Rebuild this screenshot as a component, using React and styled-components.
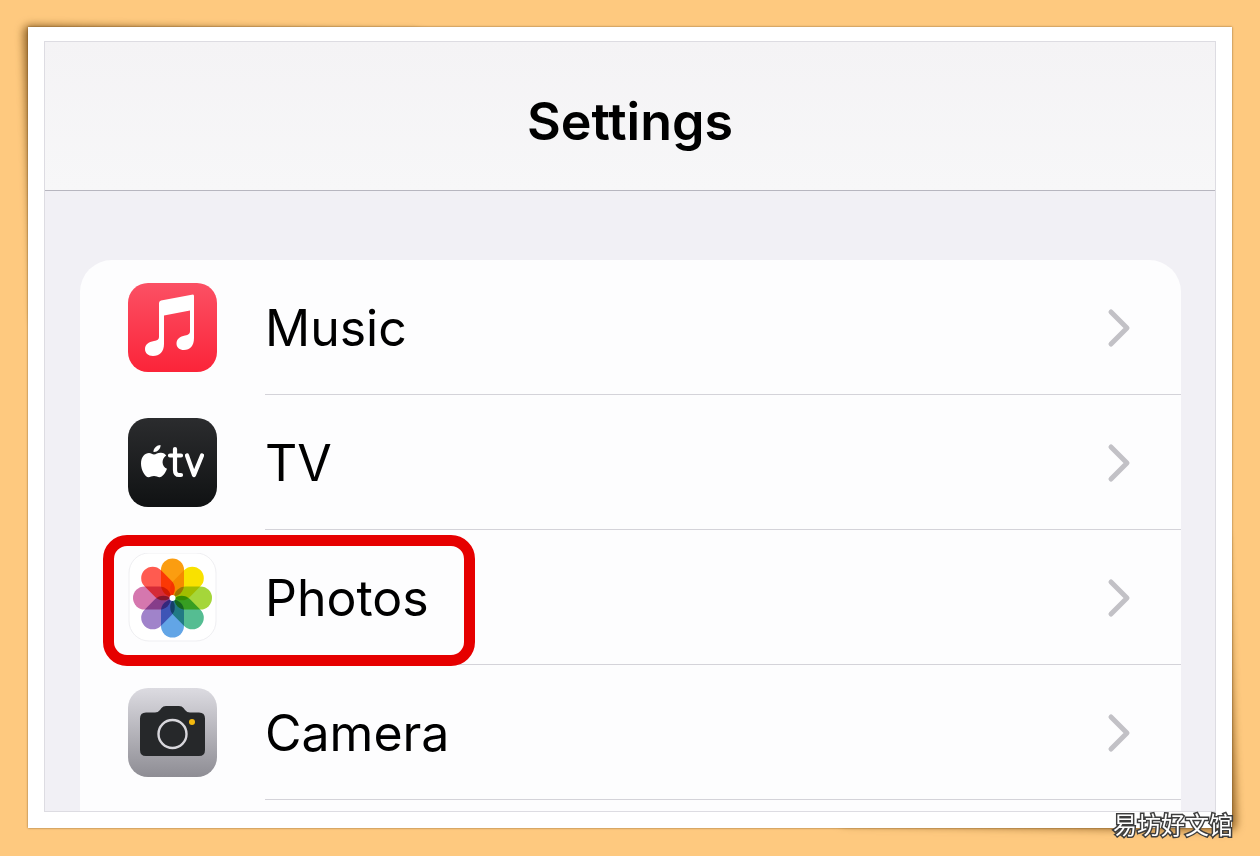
import React from "react";
import styled, { createGlobalStyle } from "styled-components";

const GlobalStyle = createGlobalStyle`
  *, *::before, *::after { box-sizing: border-box; }
  body {
    margin: 0;
    background: #fec97f;
    color: #000;
    font-family: Inter, "Liberation Sans", sans-serif;
  }
`;

const Page = styled.div`
  position: relative;
  min-height: 100vh;
  padding: 27px 28px 27px 28px;
  overflow: hidden;
  isolation: isolate;
`;

const Frame = styled.div`
  position: relative;
  padding: 14px 16px 16px;
  background: #fff;
  box-shadow: 0 0 2px rgba(90, 60, 20, 0.7);
`;

const Shadow = styled.div`
  position: absolute;
  z-index: -1;
  width: 400px;
  height: 300px;
  border-radius: 8px;
  filter: blur(4px);
  transform: skew(2deg, 1deg);
  background: rgba(110, 66, 10, 0.7);
  ${(p) =>
    p.$corner === "top"
      ? "top: 25px; left: 23px; transform-origin: top left;"
      : "bottom: 25px; right: 23px; transform-origin: bottom right;"}
`;

const Screen = styled.main`
  display: flex;
  flex-direction: column;
  border: 1px solid #dddce2;
  background: #f1f0f5;
`;

const Header = styled.header`
  display: flex;
  align-items: center;
  justify-content: center;
  height: 149px;
  padding-top: 12px;
  border-bottom: 1px solid #b7b6bf;
  background: linear-gradient(#f4f3f5, #f7f7f8);
`;

const Title = styled.h1`
  margin: 0;
  font-size: 52px;
  line-height: 60px;
  font-weight: 600;
`;

const Card = styled.nav`
  margin: 69px 34px 0 35px;
  padding-bottom: 11px;
  border-radius: 32px 32px 0 0;
  background: #fdfdfe;
`;

const List = styled.ul`
  margin: 0;
  padding: 0;
  list-style: none;
`;

const Row = styled.a`
  position: relative;
  display: flex;
  align-items: center;
  gap: 48px;
  height: 135px;
  padding-left: 48px;
  color: inherit;
  text-decoration: none;
`;

const RowBody = styled.span`
  display: flex;
  flex: 1;
  align-items: center;
  justify-content: space-between;
  height: 100%;
  padding: 2px 50px 0 0;
  border-bottom: 1px solid #d4d3d9;
`;

const Label = styled.span`
  font-size: 50px;
  line-height: 60px;
`;

const Highlight = styled.span`
  position: absolute;
  top: 5px;
  left: 23px;
  width: 372px;
  height: 131px;
  border: 11px solid #e60000;
  border-radius: 24px;
`;

const AppIcon = styled.svg`
  flex: none;
  width: 89px;
  height: 89px;
`;

const ChevronIcon = styled.svg`
  flex: none;
  width: 24px;
  height: 40px;
`;

const Watermark = styled.span`
  position: absolute;
  right: 27px;
  bottom: 17px;
  color: #fff;
  font-family: "Noto Sans CJK SC", sans-serif;
  font-size: 24px;
  line-height: 30px;
  -webkit-text-stroke: 3px #3d3d3d;
  paint-order: stroke fill;
`;

function MusicIcon() {
  return (
    <AppIcon viewBox="0 0 89 89" aria-hidden="true">
      <defs>
        <linearGradient id="musicFill" x1="0" y1="0" x2="0" y2="1">
          <stop offset="0" stopColor="#fb5064" />
          <stop offset="1" stopColor="#fb2439" />
        </linearGradient>
      </defs>
      <rect width="89" height="89" rx="20" fill="url(#musicFill)" />
      <path
        fill="#fff"
        d="M33 17.500 65 11.500Q66 11.500 66 13V55C66 63 62 67 56 67 51.500 67 48.500 64.500 48.500 60.500 48.500 56 52 53.500 57 52.500 60.500 51.800 62 51 62 48V27.500L36 32.500V61C36 69 31.500 73 25 73 20 73 17 70 17 66 17 61.500 20.500 59 26 58 29.500 57.400 31 56.500 31 53.500V20Q31 18 33 17.500Z"
      />
    </AppIcon>
  );
}

function TvIcon() {
  return (
    <AppIcon viewBox="0 0 89 89" aria-hidden="true">
      <defs>
        <linearGradient id="tvFill" x1="0" y1="0" x2="0" y2="1">
          <stop offset="0" stopColor="#2b2c2e" />
          <stop offset="1" stopColor="#101213" />
        </linearGradient>
      </defs>
      <rect width="89" height="89" rx="20" fill="url(#tvFill)" />
      <g fill="#fff">
        <path d="M32.500 27C33 30.500 29 34.500 25.500 34 25 30.500 29 27 32.500 27Z" />
        <path d="M26 36.500C28 36.500 30 34.500 33 34.800 35.500 35 37.200 36 38.200 37.500 33 41 33.500 48.500 39 50.800 37.500 55 34.500 59.200 31.500 59.200 29.500 59.200 28.500 58 26 58 23.500 58 22.500 59.200 20.500 59.200 17 59.200 13 52 13 45.500 13 39 17 35 21 35 23 35 24.500 36.500 26 36.500Z" />
      </g>
      <g fill="none" stroke="#fff" strokeWidth="4.200" strokeLinecap="round" strokeLinejoin="round">
        <path d="M47 31V52Q47 57 51 57H53M42 37.500H53M59 37.500 66 57 74 37.500" />
      </g>
    </AppIcon>
  );
}

const PETALS = [
  ["#fb9d10", 0],
  ["#f9e100", 45],
  ["#a5d63a", 90],
  ["#55bd92", 135],
  ["#62a5e6", 180],
  ["#a083ca", 225],
  ["#d577ae", 270],
  ["#ff5b50", 315],
];

const PetalGroup = styled.g`
  isolation: isolate;
`;

const Petal = styled.rect`
  mix-blend-mode: multiply;
`;

function PhotosIcon() {
  return (
    <AppIcon viewBox="0 0 89 89" aria-hidden="true">
      <rect x="1" y="0" width="87" height="88" rx="20" fill="#fff" stroke="#efeff2" />
      <PetalGroup>
        {PETALS.map(([color, angle]) => (
          <Petal
            key={angle}
            x="33"
            y="5.500"
            width="23"
            height="38"
            rx="11.500"
            fill={color}
            transform={`rotate(${angle} 44.500 45)`}
          />
        ))}
      </PetalGroup>
      <circle cx="44.500" cy="45" r="3" fill="#fff" />
    </AppIcon>
  );
}

function CameraIcon() {
  return (
    <AppIcon viewBox="0 0 89 89" aria-hidden="true">
      <defs>
        <linearGradient id="cameraFill" x1="0" y1="0" x2="0" y2="1">
          <stop offset="0" stopColor="#dcdbe1" />
          <stop offset="1" stopColor="#8e8d94" />
        </linearGradient>
      </defs>
      <rect width="89" height="89" rx="20" fill="url(#cameraFill)" />
      <path
        fill="#26282a"
        d="M18 24.500H27Q30 24.500 32 22L33.500 20Q35 18 38 18H51Q54 18 55.500 20L57 22Q59 24.500 62 24.500H71Q77 24.500 77 30.500V62Q77 68 71 68H18Q12 68 12 62V30.500Q12 24.500 18 24.500Z"
      />
      <circle cx="44.500" cy="46" r="14" fill="none" stroke="#d8d7dc" strokeWidth="2.400" />
      <circle cx="64" cy="34" r="3" fill="#f3b90f" />
    </AppIcon>
  );
}

function Chevron() {
  return (
    <ChevronIcon viewBox="0 0 24 40" aria-hidden="true">
      <path d="M4 4 20 20 4 36" fill="none" stroke="#c2c1c6" strokeWidth="5" strokeLinecap="round" strokeLinejoin="round" />
    </ChevronIcon>
  );
}

const ITEMS = [
  { label: "Music", Icon: MusicIcon },
  { label: "TV", Icon: TvIcon },
  { label: "Photos", Icon: PhotosIcon, highlighted: true },
  { label: "Camera", Icon: CameraIcon },
];

export default function App() {
  return (
    <Page>
      <GlobalStyle />
      <Shadow $corner="top" />
      <Shadow $corner="bottom" />
      <Frame>
        <Screen>
          <Header>
            <Title>Settings</Title>
          </Header>
          <Card>
            <List>
              {ITEMS.map(({ label, Icon, highlighted }) => (
                <li key={label}>
                  <Row href="#">
                    <Icon />
                    <RowBody>
                      <Label>{label}</Label>
                      <Chevron />
                    </RowBody>
                    {highlighted && <Highlight />}
                  </Row>
                </li>
              ))}
            </List>
          </Card>
        </Screen>
      </Frame>
      <Watermark>易坊好文馆</Watermark>
    </Page>
  );
}
